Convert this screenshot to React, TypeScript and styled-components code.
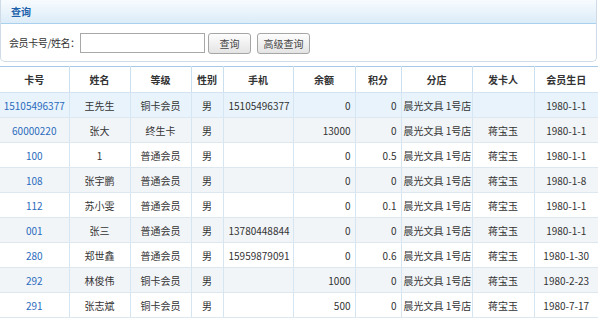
import React from 'react';
import styled, {createGlobalStyle} from 'styled-components';

const GlobalStyle = createGlobalStyle`
  html, body {
    margin: 0;
    padding: 0;
    background: #fff;
    font-family: "Noto Sans CJK SC", "Noto Sans", sans-serif;
    font-size: 10px;
    color: #333;
  }
`;

const Page = styled.div`
  width: 600px;
  height: 322px;
  overflow: hidden;
`;

const Panel = styled.div`
  width: 597px;
  box-sizing: border-box;
  border: 1px solid #cfdbe6;
  border-top: none;
  border-radius: 0 0 5px 5px;
`;

const PanelTitle = styled.div`
  height: 24px;
  box-sizing: border-box;
  padding-left: 10px;
  display: flex;
  align-items: center;
  background: linear-gradient(#f7fbfe, #dcecf8);
  border-bottom: 1px solid #a9d0ec;
  color: #1d62ab;
  font-weight: bold;
  font-size: 10px;
`;

const SearchRow = styled.div`
  height: 37px;
  display: flex;
  align-items: center;
  padding-left: 8px;
`;

const Label = styled.span`
  width: 69px;
  white-space: nowrap;
  letter-spacing: -0.4px;
  color: #333;
`;

const Input = styled.input`
  width: 125px;
  height: 20px;
  box-sizing: border-box;
  border: 1px solid #a8a8a8;
  outline: none;
  margin: 1px 0 0 2px;
`;

const Button = styled.button<{w: number; gap: number}>`
  width: ${p => p.w}px;
  height: 21px;
  box-sizing: border-box;
  border: 1px solid #a6a6a6;
  border-radius: 3px;
  background: linear-gradient(#fdfdfd, #e4e4e4);
  font-family: inherit;
  font-size: 10px;
  color: #444;
  padding: 0;
  margin: 2px 0 0 ${p => p.gap}px;
`;

const Table = styled.table`
  margin-top: 4px;
  width: 598px;
  border-collapse: collapse;
  table-layout: fixed;
  border-top: 1px solid #a6c9e8;
`;

const Th = styled.th`
  height: 25px;
  padding: 0;
  font-weight: bold;
  color: #333;
  text-align: center;
  border-left: 1px solid #cadff0;
  border-bottom: 1px solid #d3e3f1;
  &:first-child { border-left: none; }
`;

const Row = styled.tr<{tone: 'active' | 'even' | 'odd'}>`
  background: ${p => p.tone === 'active' ? '#e8f3fc' : p.tone === 'even' ? '#f2f5f8' : '#ffffff'};
`;

const Td = styled.td<{align?: 'left' | 'right' | 'center'; link?: boolean; pad?: number}>`
  height: 24px;
  padding: ${p => p.align === 'left' ? `0 0 0 ${p.pad ?? 5}px` : p.align === 'right' ? '0 4px 0 0' : '0'};
  text-align: ${p => p.align || 'center'};
  color: ${p => p.link ? '#2a6bbd' : '#333'};
  white-space: nowrap;
  overflow: hidden;
  border-left: 1px solid #d6e5f2;
  border-bottom: 1px solid #dde7f0;
  &:first-child { border-left: none; }
`;

const widths = [69, 61, 61, 32, 70, 62, 46, 71, 62, 64];
const heads = ['卡号', '姓名', '等级', '性别', '手机', '余额', '积分', '分店', '发卡人', '会员生日'];
const aligns: ('left' | 'right' | 'center')[] = ['center', 'center', 'center', 'center', 'left', 'right', 'right', 'left', 'center', 'center'];

const rows = [
  ['15105496377', '王先生', '铜卡会员', '男', '15105496377', '0', '0', '晨光文具 1号店', '', '1980-1-1'],
  ['60000220', '张大', '终生卡', '男', '', '13000', '0', '晨光文具 1号店', '蒋宝玉', '1980-1-1'],
  ['100', '1', '普通会员', '男', '', '0', '0.5', '晨光文具 1号店', '蒋宝玉', '1980-1-1'],
  ['108', '张宇鹏', '普通会员', '男', '', '0', '0', '晨光文具 1号店', '蒋宝玉', '1980-1-8'],
  ['112', '苏小雯', '普通会员', '男', '', '0', '0.1', '晨光文具 1号店', '蒋宝玉', '1980-1-1'],
  ['001', '张三', '普通会员', '男', '13780448844', '0', '0', '晨光文具 1号店', '蒋宝玉', '1980-1-1'],
  ['280', '郑世鑫', '普通会员', '男', '15959879091', '0', '0.6', '晨光文具 1号店', '蒋宝玉', '1980-1-30'],
  ['292', '林俊伟', '铜卡会员', '男', '', '1000', '0', '晨光文具 1号店', '蒋宝玉', '1980-2-23'],
  ['291', '张志斌', '铜卡会员', '男', '', '500', '0', '晨光文具 1号店', '蒋宝玉', '1980-7-17'],
];

const App = () => {
  return (
    <Page>
      <GlobalStyle/>
      <Panel>
        <PanelTitle>查询</PanelTitle>
        <SearchRow>
          <Label>会员卡号/姓名：</Label>
          <Input type="text"/>
          <Button w={43} gap={3}>查询</Button>
          <Button w={53} gap={6}>高级查询</Button>
        </SearchRow>
      </Panel>
      <Table>
        <colgroup>
          {widths.map((w, i) => <col key={i} style={{width: w}}/>)}
        </colgroup>
        <thead>
          <tr>
            {heads.map(h => <Th key={h}>{h}</Th>)}
          </tr>
        </thead>
        <tbody>
          {rows.map((r, i) => (
            <Row key={i} tone={i === 0 ? 'active' : i % 2 === 1 ? 'even' : 'odd'}>
              {r.map((c, j) => (
                <Td key={j} align={aligns[j]} link={j === 0} pad={j === 7 ? 2 : 5}>{c}</Td>
              ))}
            </Row>
          ))}
        </tbody>
      </Table>
    </Page>
  );
};

export default App;
